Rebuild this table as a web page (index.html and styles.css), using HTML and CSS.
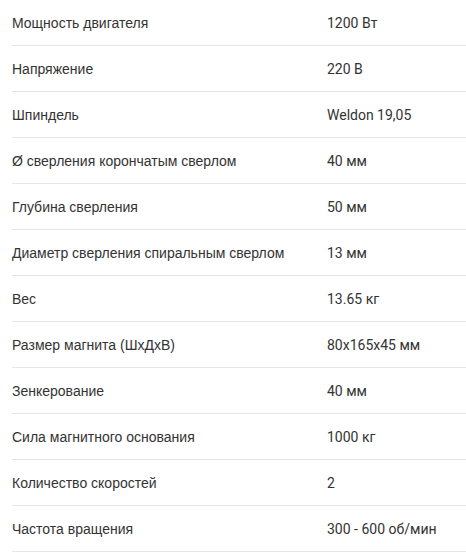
FILE: index.html
```html
<!DOCTYPE html>
<html lang="ru">
<head>
<meta charset="utf-8">
<link rel="stylesheet" href="styles.css">
</head>
<body>
<div class="specs">
  <div class="row"><div class="name">Мощность двигателя</div><div class="val">1200 Вт</div></div>
  <div class="row"><div class="name">Напряжение</div><div class="val">220 В</div></div>
  <div class="row"><div class="name">Шпиндель</div><div class="val">Weldon 19,05</div></div>
  <div class="row"><div class="name">Ø сверления корончатым сверлом</div><div class="val">40 мм</div></div>
  <div class="row"><div class="name">Глубина сверления</div><div class="val">50 мм</div></div>
  <div class="row"><div class="name">Диаметр сверления спиральным сверлом</div><div class="val">13 мм</div></div>
  <div class="row"><div class="name">Вес</div><div class="val">13.65 кг</div></div>
  <div class="row"><div class="name">Размер магнита (ШхДхВ)</div><div class="val">80x165x45 мм</div></div>
  <div class="row"><div class="name">Зенкерование</div><div class="val">40 мм</div></div>
  <div class="row"><div class="name">Сила магнитного основания</div><div class="val">1000 кг</div></div>
  <div class="row"><div class="name">Количество скоростей</div><div class="val">2</div></div>
  <div class="row"><div class="name">Частота вращения</div><div class="val">300 - 600 об/мин</div></div>
</div>
</body>
</html>
```

FILE: styles.css
```css
html, body {
  margin: 0;
  padding: 0;
  background: #fff;
}
body {
  font-family: Roboto, "Liberation Sans", sans-serif;
  font-size: 14px;
  color: #333;
}
.specs {
  margin-left: 12px;
}
.row {
  display: grid;
  grid-template-columns: 315px 1fr;
  height: 45px;
  align-items: center;
  border-bottom: 1px solid #e5e5e5;
}
.name {
  font-family: "Liberation Sans", Arial, sans-serif;
}
```
